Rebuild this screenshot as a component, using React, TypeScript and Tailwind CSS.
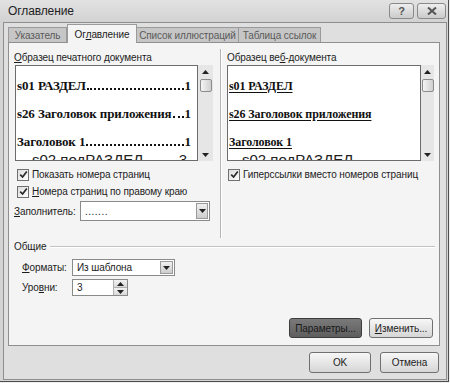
import React from "react";

function Tri({ up = false }: { up?: boolean }) {
  return (
    <svg width="7" height="4" viewBox="0 0 7 4">
      <path d={up ? "M0 4 L3.5 0 L7 4 Z" : "M0 0 L7 0 L3.5 4 Z"} fill="#222" />
    </svg>
  );
}

function Scroll({ className }: { className: string }) {
  return (
    <div className={`${className} h-full bg-[#e6e6e6] flex flex-col items-center`}>
      <div className="h-[14px] flex items-center justify-center">
        <Tri up />
      </div>
      <div className="w-[12px] h-[13px] border border-[#8c8c8c] rounded-[2px] bg-gradient-to-r from-[#f4f4f4] to-[#cfcfcf]" />
      <div className="flex-1" />
      <div className="h-[12px] flex items-center justify-center">
        <Tri />
      </div>
    </div>
  );
}

function Check({ children }: { children: React.ReactNode }) {
  return (
    <div className="flex items-center h-[17px] gap-[3px] whitespace-nowrap">
      <span className="w-[12px] h-[12px] shrink-0 border border-[#707070] bg-gradient-to-br from-[#dcdcdc] to-[#ffffff] flex items-center justify-center">
        <svg width="9" height="9" viewBox="0 0 9 9">
          <path d="M1.2 4.6 L3.6 7 L7.8 1.4" stroke="#2a2a2a" strokeWidth="1.7" fill="none" />
        </svg>
      </span>
      <span>{children}</span>
    </div>
  );
}

function DropBtn({ className }: { className: string }) {
  return (
    <div
      className={`${className} shrink-0 border border-[#9a9a9a] bg-gradient-to-b from-[#f0f0f0] to-[#cdcdcd] flex items-center justify-center`}
    >
      <Tri />
    </div>
  );
}

// heading line with dotted leader up to the page number
function Leader({ title, num }: { title: string; num: string }) {
  return (
    <div className="h-[28px] flex items-center font-['Liberation_Serif',serif] font-bold text-[13px] text-[#111] whitespace-nowrap">
      <span className="shrink-0">{title}</span>
      <span className="flex-1 min-w-0 mt-[6px] mx-[1px] h-[2px] border-b-2 border-dotted border-[#111]" />
      <span className="shrink-0">{num}</span>
    </div>
  );
}

function WebLine({ title }: { title: string }) {
  return (
    <div className="h-[28px] flex items-center font-['Liberation_Serif',serif] font-bold text-[12px] text-[#111] whitespace-nowrap">
      <span className="underline underline-offset-[2px]">{title}</span>
    </div>
  );
}

function Btn({ className, children }: { className: string; children: React.ReactNode }) {
  return (
    <div
      className={`${className} h-full border border-[#707070] rounded-[3px] bg-gradient-to-b from-[#f7f7f7] to-[#d6d6d6] flex items-center justify-center whitespace-nowrap`}
    >
      {children}
    </div>
  );
}

export default function App() {
  return (
    <div className="w-[450px] h-[383px] bg-[#efefef] font-['Liberation_Sans',Arial,sans-serif] text-[10px] tracking-[-0.1px] text-[#1c1c1c] overflow-hidden">
      <div className="w-[449px] h-[382px] bg-[#d4d4d4] border-r border-b border-[#4d4d4d] flex flex-col">
        {/* title bar */}
        <div className="h-[22px] flex items-start justify-between pl-[8px] pr-[2px] bg-gradient-to-b from-[#e2e2e2] to-[#d2d2d2]">
          <span className="text-[12px] leading-[22px] text-[#222]">Оглавление</span>
          <div className="flex gap-[3px] pt-[3px]">
            <div className="w-[25px] h-[16px] border border-[#8a8a8a] rounded-[3px] bg-gradient-to-b from-[#eeeeee] to-[#cbcbcb] flex items-center justify-center text-[11px] font-bold text-[#555]">
              ?
            </div>
            <div className="w-[29px] h-[16px] border border-[#8a8a8a] rounded-[3px] bg-gradient-to-b from-[#eeeeee] to-[#cbcbcb] flex items-center justify-center">
              <svg width="10" height="8" viewBox="0 0 10 8">
                <path d="M1 0.5 L9 7.5 M9 0.5 L1 7.5" stroke="#555" strokeWidth="2" />
              </svg>
            </div>
          </div>
        </div>

        {/* client */}
        <div className="flex-1 ml-[3px] mr-[1px] mb-[1px] border border-[#8e8e8e] bg-[#dfdfdf] flex flex-col pl-[4px]">
          {/* tabs */}
          <div className="mt-[1px] h-[18px] flex items-end whitespace-nowrap">
            <div className="w-[59px] h-[15px] border border-b-0 border-[#9a9a9a] bg-[#c6c6c6] flex items-center justify-center text-[#5a5a5a]">
              Указатель
            </div>
            <div className="w-[70px] h-[19px] -mb-[1px] border border-b-0 border-[#9a9a9a] bg-[#f4f4f4] flex items-center justify-center relative z-10">
              <span>
                Ог<u>л</u>авление
              </span>
            </div>
            <div className="w-[102px] h-[15px] border border-b-0 border-l-0 border-[#9a9a9a] bg-[#c6c6c6] flex items-center justify-center text-[#5a5a5a]">
              Список иллюстраций
            </div>
            <div className="w-[82px] h-[15px] border border-b-0 border-l-0 border-[#9a9a9a] bg-[#c6c6c6] flex items-center justify-center text-[#5a5a5a]">
              Таблица ссылок
            </div>
          </div>

          {/* panel */}
          <div className="w-[432px] h-[304px] border border-[#8f8f8f] bg-[#f4f4f4] flex flex-col">
            <div className="h-[195px] flex pl-[5px]">
              {/* left column */}
              <div className="w-[199px] pt-[8px] flex flex-col">
                <div className="h-[14px] leading-[14px] whitespace-nowrap">
                  <u>О</u>бразец печатного документа
                </div>
                <div className="h-[96px] ml-[1px] flex">
                  <div className="w-[183px] h-full border border-[#6c6c6c] bg-white pl-[1px] pr-[6px] pt-[6px] overflow-hidden">
                    <Leader title="s01 РАЗДЕЛ" num="1" />
                    <Leader title="s26 Заголовок приложения" num="1" />
                    <Leader title="Заголовок 1" num="1" />
                    <div className="-mt-[3px] h-[15px] flex items-center justify-between pl-[15px] pr-[4px] text-[15px] tracking-normal text-[#222] whitespace-nowrap">
                      <span>s02 подРАЗДЕЛ</span>
                      <span>3</span>
                    </div>
                  </div>
                  <Scroll className="w-[15px]" />
                </div>
                <div className="mt-[5px] ml-[3px]">
                  <Check>Показать номера страниц</Check>
                  <Check>
                    <u>Н</u>омера страниц по правому краю
                  </Check>
                </div>
                <div className="mt-[1px] h-[20px] flex items-center whitespace-nowrap">
                  <span className="w-[66px]">
                    <u>З</u>аполнитель:
                  </span>
                  <div className="w-[130px] h-full border border-[#8a8a8a] bg-white flex items-center justify-between pl-[4px] pr-[1px]">
                    <span className="tracking-[0.5px]">.......</span>
                    <DropBtn className="w-[12px] h-[16px]" />
                  </div>
                </div>
              </div>

              {/* separator */}
              <div className="ml-[7px] mt-[6px] w-[2px] h-[189px] border-l border-[#b4b4b4] border-r border-r-white" />

              {/* right column */}
              <div className="ml-[5px] w-[207px] pt-[8px] flex flex-col">
                <div className="h-[14px] leading-[14px] whitespace-nowrap">
                  Образец ве<u>б</u>-документа
                </div>
                <div className="h-[96px] flex">
                  <div className="w-[194px] h-full border border-[#6c6c6c] bg-white pl-[1px] pt-[6px] overflow-hidden">
                    <WebLine title="s01 РАЗДЕЛ" />
                    <WebLine title="s26 Заголовок приложения" />
                    <WebLine title="Заголовок 1" />
                    <div className="-mt-[3px] h-[15px] flex items-center pl-[13px] text-[15px] tracking-normal text-[#222] whitespace-nowrap">
                      s02 подРАЗДЕЛ
                    </div>
                  </div>
                  <Scroll className="w-[13px]" />
                </div>
                <div className="mt-[5px] ml-[1px]">
                  <Check>Гиперссылки вместо номеров страниц</Check>
                </div>
              </div>
            </div>

            {/* general group */}
            <div className="mt-[2px] h-[13px] flex items-center pl-[5px] pr-[4px]">
              <span>Общие</span>
              <div className="flex-1 ml-[4px] h-[2px] border-t border-[#c2c2c2] border-b border-b-white" />
            </div>
            <div className="mt-[6px] h-[17px] flex items-center pl-[13px] whitespace-nowrap">
              <span className="w-[50px]">
                <u>Ф</u>орматы:
              </span>
              <div className="w-[103px] h-full border border-[#8a8a8a] bg-white flex items-center justify-between pl-[4px] pr-[1px]">
                <span>Из шаблона</span>
                <DropBtn className="w-[13px] h-[13px]" />
              </div>
            </div>
            <div className="mt-[3px] h-[17px] flex items-center pl-[13px] whitespace-nowrap">
              <span className="w-[50px]">
                Уро<u>в</u>ни:
              </span>
              <div className="w-[56px] h-full border border-[#8a8a8a] bg-white flex items-center justify-between pl-[4px]">
                <span>3</span>
                <div className="w-[14px] h-full border-l border-[#b0b0b0] flex flex-col">
                  <div className="flex-1 bg-gradient-to-b from-[#f2f2f2] to-[#d8d8d8] border-b border-[#b0b0b0] flex items-center justify-center">
                    <Tri up />
                  </div>
                  <div className="flex-1 bg-gradient-to-b from-[#f2f2f2] to-[#d8d8d8] flex items-center justify-center">
                    <Tri />
                  </div>
                </div>
              </div>
            </div>
            <div className="mt-[22px] h-[20px] flex justify-end gap-[7px] pr-[6px]">
              <div className="w-[73px] h-full border border-[#3c3c3c] rounded-[3px] bg-gradient-to-b from-[#7a7a7a] to-[#5e5e5e] flex items-center justify-center text-[#1a1a1a] whitespace-nowrap">
                Параметры...
              </div>
              <Btn className="w-[64px]">
                <span>
                  <u>И</u>зменить...
                </span>
              </Btn>
            </div>
          </div>

          {/* dialog buttons */}
          <div className="mt-[6px] h-[21px] flex justify-end gap-[9px] pr-[7px]">
            <Btn className="w-[62px]">OK</Btn>
            <Btn className="w-[59px]">Отмена</Btn>
          </div>
        </div>
      </div>
    </div>
  );
}
